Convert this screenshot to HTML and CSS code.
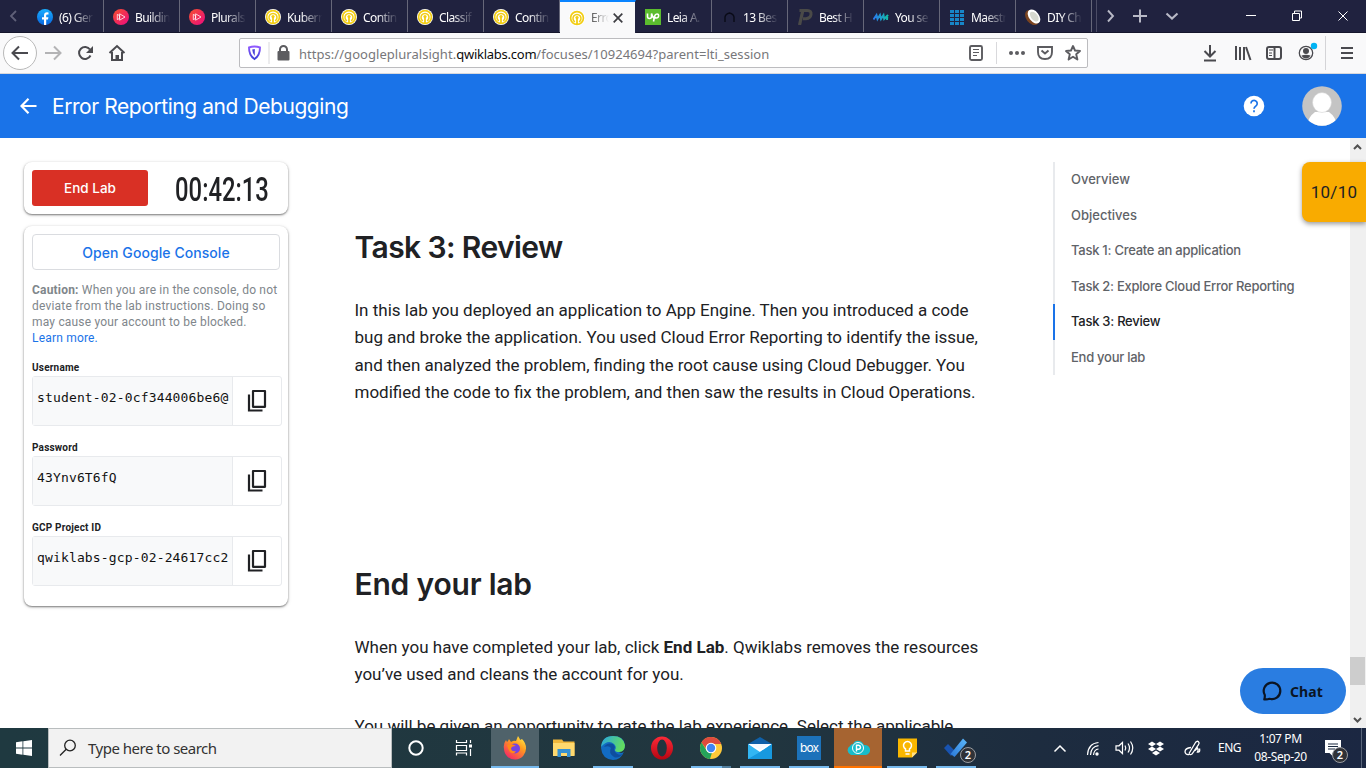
FILE: index.html
```html
<!DOCTYPE html>
<html lang="en">
<head>
<meta charset="utf-8">
<title>Error Reporting and Debugging</title>
<link rel="stylesheet" href="styles.css">
</head>
<body>
<svg class="defs" width="0" height="0">
  <defs>
    <linearGradient id="fb" x1="0" y1="0" x2="0" y2="1"><stop offset="0" stop-color="#19afff"/><stop offset="1" stop-color="#0866e0"/></linearGradient>
    <linearGradient id="ps" x1="0" y1="0" x2="1" y2="1"><stop offset="0" stop-color="#f6512d"/><stop offset="1" stop-color="#ec0a80"/></linearGradient>
    <linearGradient id="shield" x1="0" y1="0" x2="0" y2="1"><stop offset="0" stop-color="#9059ff"/><stop offset="1" stop-color="#3a3fd6"/></linearGradient>
    <linearGradient id="wave" x1="0" y1="0" x2="1" y2="0"><stop offset="0" stop-color="#2a78f0"/><stop offset="1" stop-color="#12bfa8"/></linearGradient>
    <linearGradient id="ff" x1=".9" y1="0" x2=".2" y2="1"><stop offset="0" stop-color="#fff04a"/><stop offset=".4" stop-color="#ff9a1f"/><stop offset="1" stop-color="#f5206a"/></linearGradient>
    <linearGradient id="edge" x1="0" y1="0" x2="1" y2=".3"><stop offset="0" stop-color="#27a5e4"/><stop offset="1" stop-color="#62dc60"/></linearGradient>
    <linearGradient id="opera" x1="0" y1="0" x2="0" y2="1"><stop offset="0" stop-color="#ff2a38"/><stop offset="1" stop-color="#b40612"/></linearGradient>
    <linearGradient id="check" x1="0" y1="1" x2="1" y2="0"><stop offset="0" stop-color="#2a78d8"/><stop offset="1" stop-color="#5cb8fa"/></linearGradient>
  </defs>
  <symbol id="qwik" viewBox="0 0 16 16"><circle cx="8" cy="8" r="8" fill="#fff"/><circle cx="8" cy="8" r="6.4" fill="none" stroke="#f2cd13" stroke-width="1.7"/><path d="M5.9 11.8A4 4 0 1 1 10.1 11.8" fill="none" stroke="#f2cd13" stroke-width="1.5"/><circle cx="8" cy="7.6" r="1.6" fill="#f2cd13"/><path d="M8 8v7" stroke="#f2cd13" stroke-width="1.8"/></symbol>
  <symbol id="plural" viewBox="0 0 16 16"><circle cx="8" cy="8" r="8" fill="url(#ps)"/><path d="M4.3 5.4v5.2l2.3-1.2V6.600zM6.600 4.800v6.4L12 8z" fill="none" stroke="#fff" stroke-width=".9" opacity=".85"/></symbol>
  <symbol id="copy" viewBox="0 0 24 24"><path d="M8 2h12v15.800H8z" fill="none" stroke="#202124" stroke-width="2.200" stroke-linejoin="round"/><path d="M4 5.500v16H17.500" fill="none" stroke="#202124" stroke-width="2.200"/></symbol>
</svg>

<div class="tabs">
  <svg class="scroll-left" viewBox="0 0 28 32"><path d="M16 11l-5 5 5 5" fill="none" stroke="#5f6078" stroke-width="1.800"/></svg>
  <div class="tab"><svg viewBox="0 0 16 16"><circle cx="8" cy="8" r="8" fill="url(#fb)"/><path d="M7 16v-5.400H5V8.300h2V6.500C7 4.400 8.200 3.300 10 3.300l1.500.1v2h-1c-1 0-1.300.5-1.300 1.200v1.700h2.200l-.4 2.300H9.200V16z" fill="#fff"/></svg><span>(6) Ger</span></div>
  <div class="tab"><svg><use href="#plural"/></svg><span>Buildin</span></div>
  <div class="tab"><svg><use href="#plural"/></svg><span>Plurals</span></div>
  <div class="tab"><svg><use href="#qwik"/></svg><span>Kubern</span></div>
  <div class="tab"><svg><use href="#qwik"/></svg><span>Contin</span></div>
  <div class="tab"><svg><use href="#qwik"/></svg><span>Classif</span></div>
  <div class="tab"><svg><use href="#qwik"/></svg><span>Contin</span></div>
  <div class="tab active"><svg><use href="#qwik"/></svg><span>Erro</span><svg class="close" viewBox="0 0 10 10"><path d="M.7.7l8.600 8.600M9.300.7L.7 9.300" stroke="#3d3d42" stroke-width="1.700"/></svg></div>
  <div class="tab"><svg viewBox="0 0 16 16"><path d="M0 0h16v16H0z" fill="#5bbc2e"/><path d="M2.500 4.500v3q0 2 2 2t2-2v-3q1 4 3 5M8.500 12.500L9.700 7q.5-2 2.300-2t1.600 2q-.3 2-2.200 2Q10 9 9 7.500" fill="none" stroke="#fff" stroke-width="1.600"/></svg><span>Leia A.</span></div>
  <div class="tab"><svg viewBox="0 0 16 16"><path d="M4 13V8Q4.500 5 8.500 4 12.500 5 13 8v5" fill="none" stroke="#090a17" stroke-width="1.400"/></svg><span>13 Bes</span></div>
  <div class="tab"><svg viewBox="0 0 16 16"><path d="M2.500 1.500h8q4 .2 3.500 4T9 9.700H6" fill="none" stroke="#4a4a48" stroke-width="3"/><path d="M6 1L2.500 16" stroke="#4a4a48" stroke-width="3.200"/></svg><span>Best H</span></div>
  <div class="tab"><svg viewBox="0 0 16 16"><path d="M.5 10.500L3.500 6l1 4L7 6l1 4 2.500-4 .7 4L15 6M14.500 6l-.5 5" fill="none" stroke="url(#wave)" stroke-width="1.900"/></svg><span>You se</span></div>
  <div class="tab"><svg viewBox="0 0 16 16"><path d="M1 2.500h14M1 6.500h14M1 10.500h14M1 14.500h14" stroke="#1786c8" stroke-width="3" stroke-dasharray="4 1"/></svg><span>Maestr</span></div>
  <div class="tab last"><svg viewBox="0 0 16 16"><ellipse cx="7" cy="8.500" rx="5.800" ry="8.500" transform="rotate(-38 7 8.500)" fill="#7a4320"/><ellipse cx="9" cy="7.500" rx="5" ry="8" transform="rotate(-38 9 7.500)" fill="#fff"/><ellipse cx="9.300" cy="7.600" rx="3.300" ry="5.700" transform="rotate(-38 9.300 7.600)" fill="#d6d8cf"/></svg><span>DIY Ch</span></div>
  <svg class="tab-tools" viewBox="0 0 274 32"><path d="M4.500 0v33" stroke="#4c4d66"/><path d="M16 10.500l5 5.500-5 5.500" fill="none" stroke="#b8b9c6" stroke-width="1.900"/><path d="M41 16h14M48 9.500v13" stroke="#b8b9c6" stroke-width="2"/><path d="M74.500 13.500l5.500 5 5.500-5" fill="none" stroke="#b8b9c6" stroke-width="2.100"/><path d="M154 15.500h10M200.500 13.500h7v7h-7zM202.500 13v-2h7v7h-2M246.500 11.500l9 9M255.500 11.500l-9 9" fill="none" stroke="#fff" stroke-width="1"/></svg>
</div>

<div class="toolbar">
  <svg class="nav" viewBox="0 0 239 40"><circle cx="20" cy="20" r="16.500" fill="#fff" stroke="#b9b9b9"/><g fill="none" stroke="#4a4a4f" stroke-width="2"><path d="M28 20H13M19 13.500L12.500 20l6.500 6.500"/><path d="M45 20h15M54 13.500l6.500 6.500-6.500 6.500" stroke="#b3b3b5"/><path d="M90 16.500A6 6 0 1 0 90.500 22.500"/><path d="M109.500 20l7.500-7 7.500 7M112 19v8h10v-8"/></g><path d="M93 13v7h-7z" fill="#4a4a4f"/><path d="M115.500 22h3.500v6h-3.500z" fill="#4a4a4f"/></svg>
  <div class="url">
    <svg class="lock" viewBox="0 0 58 28"><path d="M14 7.500q-3 0-5.500 1 0 8 5.500 11.500 5.500-3.500 5.500-11.500-2.500-1-5.500-1z" fill="none" stroke="url(#shield)" stroke-width="1.900"/><path d="M14.300 10q-2 0-2.600.4.400 4.500 2.600 6.600z" fill="#4b45d8"/><path d="M28.500 3v22" stroke="#d9d9dc"/><rect x="37" y="12" width="12" height="9.500" rx="1" fill="#5c5c60"/><path d="M39.500 13v-2.500a3.500 3.500 0 0 1 7 0V13" fill="none" stroke="#5c5c60" stroke-width="2"/></svg>
    <div class="address">https://googlepluralsight.<b>qwiklabs.com</b>/focuses/10924694?parent=lti_session</div>
    <svg class="url-tools" viewBox="0 0 127 28"><g fill="none" stroke="#5c5c60" stroke-width="1.900"><rect x="10" y="7" width="12" height="14" rx="1.500"/><path d="M13 10.500h6M13 13.500h6M13 16.500h4" stroke-width="1.200"/><path d="M78 8h14v5q0 7-7 7t-7-7zM81.500 11.500l3.500 3 3.500-3"/><path d="M113 7l2 4.500 5 .5-3.800 3.300 1.200 5.200L113 17.800l-4.400 2.700 1.200-5.200L106 12l5-.5z" stroke-linejoin="round"/></g><path d="M36.500 3v22" stroke="#d9d9dc"/><g fill="#5c5c60"><circle cx="51" cy="14" r="2"/><circle cx="57" cy="14" r="2"/><circle cx="63" cy="14" r="2"/></g></svg>
  </div>
  <svg class="actions" viewBox="0 0 178 40"><g fill="none" stroke="#4a4a4f" stroke-width="2"><path d="M22 12v11M16.500 18l5.500 5.500 5.500-5.500M16 27.500h12M48 13v14M52 14v13M56 14v13" /><path d="M58 14l4.500 13"/><rect x="79" y="14" width="14" height="12" rx="2"/><path d="M86.500 14v12"/><path d="M81 17h4M81 20h3M81 22.500h3" stroke-width="1"/><circle cx="118" cy="20" r="6.700" stroke-width="1.300"/><path d="M153 15h12M153 20h12M153 25h12" stroke-width="2"/></g><circle cx="118" cy="18" r="3" fill="#4a4a4f"/><path d="M113.500 22.500q4.500-1.500 9 0-1.500 3-4.500 3t-4.500-3z" fill="#4a4a4f"/><circle cx="126" cy="13" r="3.200" fill="#00b3f4"/><path d="M137.500 3v34" stroke="#d4d4d7"/></svg>
</div>

<header class="header">
  <svg class="back" viewBox="0 0 18 18"><path d="M16.500 9H2M8.500 1.800L1.500 9l7 7.200" fill="none" stroke="#fff" stroke-width="2.200"/></svg>
  <h1>Error Reporting and Debugging</h1>
  <svg class="help" viewBox="0 0 22 22"><circle cx="11" cy="11" r="10.300" fill="#fff"/><path d="M8 8.500a3.100 3.100 0 1 1 5 2.400q-2 1.500-2 2.900M11 15.300v2" fill="none" stroke="#1a73e8" stroke-width="1.700"/></svg>
  <svg class="avatar" viewBox="0 0 40 40"><clipPath id="face"><circle cx="20" cy="20" r="19.800"/></clipPath><g clip-path="url(#face)"><path d="M0 0h40v40H0z" fill="#c4c4c4"/><path d="M5 40q1-9 8-14h14q7 5 8 14z" fill="#fff"/><ellipse cx="20" cy="16.500" rx="9.500" ry="10" fill="#fff" stroke="#d4d4d4" stroke-width=".6"/></g></svg>
</header>

<main class="page">
  <aside class="side">
    <section class="card timer-card"><button class="end">End Lab</button><div class="timer"><span>00:42:13</span></div></section>
    <section class="card details">
      <button class="open">Open Google Console</button>
      <p class="caution"><b>Caution:</b> When you are in the console, do not<br>deviate from the lab instructions. Doing so<br>may cause your account to be blocked.<br><a>Learn more.</a></p>
      <label>Username</label>
      <div class="field"><code>student-02-0cf344006be6@</code><div class="copy"><svg><use href="#copy"/></svg></div></div>
      <label>Password</label>
      <div class="field"><code>43Ynv6T6fQ</code><div class="copy"><svg><use href="#copy"/></svg></div></div>
      <label>GCP Project ID</label>
      <div class="field"><code>qwiklabs-gcp-02-24617cc2</code><div class="copy"><svg><use href="#copy"/></svg></div></div>
    </section>
  </aside>
  <article class="lab">
    <h2 class="review">Task 3: Review</h2>
    <p>In this lab you deployed an application to App Engine. Then you introduced a code<br>bug and broke the application. You used Cloud Error Reporting to identify the issue,<br>and then analyzed the problem, finding the root cause using Cloud Debugger. You<br>modified the code to fix the problem, and then saw the results in Cloud Operations.</p>
    <h2 class="ending">End your lab</h2>
    <p>When you have completed your lab, click <b>End Lab</b>. Qwiklabs removes the resources<br>you’ve used and cleans the account for you.</p>
    <p>You will be given an opportunity to rate the lab experience. Select the applicable</p>
  </article>
  <nav class="outline">
    <a>Overview</a><a>Objectives</a><a>Task 1: Create an application</a><a>Task 2: Explore Cloud Error Reporting</a><a class="current">Task 3: Review</a><a>End your lab</a>
  </nav>
  <div class="scrollbar"><svg viewBox="0 0 16 16"><path d="M4 11l3.500-3.500L11 11" fill="none" stroke="#505050" stroke-width="2"/></svg><i></i><svg viewBox="0 0 16 16"><path d="M4 6l3.500 3.500L11 6" fill="none" stroke="#505050" stroke-width="2"/></svg></div>
  <div class="score">10/10</div>
  <div class="chat"><svg viewBox="0 0 20 20"><path d="M2.300 18.300Q3 16 2.800 14A8.300 8.300 0 1 1 7.500 17.800Q5 18.800 2.300 18.300z" fill="none" stroke="#0b1524" stroke-width="2.200" stroke-linejoin="round"/></svg><span>Chat</span></div>
</main>

<footer class="taskbar">
  <svg class="start" viewBox="0 0 48 40"><path d="M16 14.300l6.500-1v6.200H16zM23.300 13.200L32 12v7.500h-8.700zM16 20.400h6.500v6.300l-6.500-1zM23.300 20.400H32V28l-8.700-1.200z" fill="#fff"/></svg>
  <div class="search"><svg viewBox="0 0 18 18"><circle cx="11" cy="6.500" r="5.300" fill="none" stroke="#222" stroke-width="1.300"/><path d="M7.200 10.300L1 16.500" stroke="#222" stroke-width="1.300"/></svg><span>Type here to search</span></div>
  <svg class="cell" viewBox="0 0 48 40"><circle cx="24" cy="20" r="6.700" fill="none" stroke="#fff" stroke-width="2"/></svg>
  <svg class="view" viewBox="0 0 51 40"><path d="M16.500 12v2.500h10V12M16.500 27.500V25h10v2.500M16.500 17.500h10v5h-10zM30.500 12v3M30.500 21v7" fill="none" stroke="#fff" stroke-width="1.200"/><path d="M29 16.500h3v3h-3z" fill="#fff"/></svg>
  <div class="apps">
    <div class="app selected"><svg viewBox="0 0 24 24"><path d="M5 5l1-2 2 3q3-2 5-1l2-5q2 3 2 4l2-1q4 4 4 9a11 11 0 0 1-22 1Q0 8 3 4l1 2z" fill="url(#ff)"/><circle cx="12" cy="12.500" r="5" fill="#7543e2"/><path d="M4 9q5-2 9 1-5 0-5 3 1 3 5 2-2 4-6 1-2-3-3-7z" fill="#ff8a16"/></svg></div>
    <div class="app"><svg viewBox="0 0 24 24"><path d="M1 3.500h9l1.500 2H22.500v14H1z" fill="#f0b73c"/><path d="M1 7h21.500v13H1z" fill="#ffd96e"/><path d="M5.500 13h13v8h-3.500v-4H9v4H5.500z" fill="#3691d2"/></svg></div>
    <div class="app run"><svg viewBox="0 0 24 24"><path d="M0 12Q1 0 12 0q11 0 12 9 0 6-6 7 3 2 5-.5Q20 24 12 24 1 23 0 12z" fill="#126bc2"/><path d="M0 11Q1 0 12 0q10 0 12 9 0 7-6 7-4 0-4-2 2-3-1-6-6-5-13 3z" fill="url(#edge)"/><path d="M12 8q-6-2-9 3 5-2 7 1-3 5 3 9 4 2 9-3-4 2-7-1-3-3-1-6z" fill="#0e4e9e"/></svg></div>
    <div class="app"><svg viewBox="0 0 24 24"><ellipse cx="12" cy="12" rx="11" ry="11.500" fill="url(#opera)"/><ellipse cx="12" cy="12" rx="4.800" ry="8.500" fill="#21353f"/></svg></div>
    <div class="app run chrome"><svg viewBox="0 0 24 24"><circle cx="12" cy="12" r="11" fill="#ffca3a"/><path d="M2.500 6.500A11 11 0 0 1 22.200 8H12L8 14z" fill="#df4b3e"/><path d="M2.500 6.500L8 15q2 2 5 1.500L11 23A11 11 0 0 1 2.500 6.500z" fill="#25a35a"/><circle cx="12" cy="12" r="5.300" fill="#fff"/><circle cx="12" cy="12" r="4.200" fill="#4285f4"/></svg></div>
    <div class="app run"><svg viewBox="0 0 24 24"><path d="M0 8l12-7 12 7v15H0z" fill="#0f60a8"/><path d="M0 8h24L12 18z" fill="#fff"/><path d="M0 8l12 8 12-8v15H0z" fill="#32b6f3"/><path d="M0 23l12-7 12-8v15z" fill="#1799df"/><path d="M3 8h18l-9 6z" fill="#f5faff"/></svg></div>
    <div class="app run"><div class="box">box</div></div>
    <div class="app cloud"><svg viewBox="0 0 24 24"><path d="M5 19a5 5 0 0 1-1-9q1-2 3-2 2-4 6-3 3 0 5 4a5 5 0 0 1 2 10z" fill="#18bdca"/><circle cx="12" cy="12" r="5.500" fill="none" stroke="#fff"/><path d="M10.500 15.500V9.300h2q2 .2 2 2t-2 1.900h-2" fill="none" stroke="#fff" stroke-width="1.400"/></svg></div>
    <div class="app run"><svg viewBox="0 0 24 24"><path d="M3 2.500h19v14l-5 5H3z" fill="#fab700"/><path d="M17 21.500v-5h5z" fill="#ffe08a"/><path d="M10.500 15v-2a4 4 0 1 1 4 0v2zM10.500 18h4" fill="none" stroke="#fff" stroke-width="1.500"/></svg></div>
    <div class="app run todo"><svg viewBox="0 0 24 24"><path d="M0 12l4-4 7 7-4 5z" fill="#1853b0"/><path d="M6.500 18L19 2.500l4 4L10.500 21z" fill="url(#check)"/></svg><em>2</em></div>
  </div>
  <svg class="tray" viewBox="0 0 170 40"><g fill="none" stroke="#fff" stroke-width="1.500"><path d="M14.500 23.500L20 18l5.500 5.500"/><path d="M47.500 27Q48 15.500 58.500 14.500M50.500 27Q51 18.500 58.500 17.700M53.500 27Q54 21.500 58.500 21" stroke-width="1.200"/><path d="M76 17.800h3l3.500-3.300v11L79 22.200h-3zM85 17.500q1.500 2.500 0 5M88 15.500q3 4.500 0 9M90.500 13.500q4.500 6.500 0 13" stroke-width="1.200"/><path d="M149 25.500L155.500 14.500q1.500-2 3-.8 1.300 1.200 0 3L152 26q-2 1.500-3-.5M151 19.500q-6 .5-6 4.500.5 3 4 2.500M155 22.500l2.500-2.500q1.500 2 0 4 3 .5 2-3.500" stroke-width="1.300"/></g><circle cx="57" cy="26" r="1.700" fill="#fff"/><path d="M108 16l4-2.500 4 2.500-4 2.500zM116 16l4-2.500 4 2.500-4 2.500zM108 21l4-2.500 4 2.500-4 2.500zM116 21l4-2.500 4 2.500-4 2.500zM112 25l4-2.500 4 2.500-4 2.500z" fill="#fff"/></svg>
  <span class="lang">ENG</span>
  <div class="clock"><span>1:07 PM</span><span>08-Sep-20</span></div>
  <div class="notice"><svg viewBox="0 0 16 16"><path d="M0 0h16v13H7.500v3L4.500 13H0z" fill="#fff"/><path d="M3 4h10M3 6.500h10M3 9h7" stroke="#1c2b40" stroke-width="1.100"/></svg><em>2</em></div>
</footer>
</body>
</html>
```
FILE: styles.css
```css
* { box-sizing: border-box; }
body { margin: 0; width: 1366px; height: 768px; overflow: hidden; background: #fff; color: #202124; font-family: Roboto, sans-serif; display: flex; flex-direction: column; }
svg { display: block; flex: none; }
.defs { position: absolute; }
button { margin: 0; padding: 0; font-family: Inter, sans-serif; }

.tabs { height: 33px; flex: none; display: flex; background: #20223f; border-bottom: 1px solid #15162c; }
.scroll-left { width: 28px; height: 32px; }
.tab { width: 76px; height: 32px; flex: none; padding: 2px 5px 0 9px; display: flex; align-items: center; border-right: 1px solid #666779; color: #fff; font: 12px "Noto Sans", sans-serif; }
.tab svg { width: 16px; height: 16px; margin-right: 6px; }
.tab span { flex: 1; white-space: nowrap; letter-spacing: -.6px; -webkit-mask-image: linear-gradient(90deg, #000 35%, transparent 90%); mask-image: linear-gradient(90deg, #000 35%, transparent 90%); }
.tab.active { height: 33px; background: #f9f9fa; border-top: 2px solid #0a84ff; border-right: 1px solid #20223f; color: #222; padding-top: 0; padding-right: 12px; }
.tab.active span { width: 18px; flex: none; -webkit-mask-image: linear-gradient(90deg, #000c, transparent); mask-image: linear-gradient(90deg, #000c, transparent); }
.tab.active .close { width: 10px; height: 10px; margin: 0 0 0 4px; }
.tab-tools { width: 274px; height: 32px; }

.toolbar { height: 41px; flex: none; display: flex; align-items: flex-start; background: #f9f9fa; border-bottom: 1px solid #d8d8dc; }
.nav { width: 239px; height: 40px; }
.url { width: 849px; height: 30px; margin-top: 5px; display: flex; align-items: center; background: #fff; border: 1px solid #bcbcbf; border-radius: 2px; }
.lock { width: 59px; height: 28px; }
.address { width: 661px; padding-top: 1px; white-space: nowrap; color: #77777a; font: 13px "Noto Sans", sans-serif; letter-spacing: .04px; }
.address b { color: #0c0c0d; font-weight: 400; letter-spacing: -.25px; }
.url-tools { width: 127px; height: 28px; }
.actions { width: 178px; height: 40px; margin-left: 100px; }

.header { height: 64px; flex: none; display: flex; align-items: center; padding: 0 24px 0 20px; background: #1a73e8; color: #fff; }
.back { width: 18px; height: 18px; }
.header h1 { margin: 0 auto 0 14px; font: 400 21px Inter, sans-serif; letter-spacing: -.43px; }
.help { width: 22px; height: 22px; margin-right: 37px; }
.avatar { width: 40px; height: 40px; }

.page { position: relative; height: 590px; flex: none; display: flex; overflow: hidden; padding-left: 24px; }
.side { width: 264px; flex: none; padding-top: 24px; display: flex; flex-direction: column; gap: 12px; }
.card { background: #fff; border-radius: 8px; box-shadow: 0 1px 2px #0007, 0 1px 4px #0002; }
.timer-card { height: 52px; padding: 8px; display: flex; }
.end { width: 116px; height: 36px; flex: none; background: #d93025; color: #fff; border: 0; border-radius: 3px; font-size: 13.5px; font-weight: 500; }
.timer { flex: 1; min-width: 0; display: flex; justify-content: center; align-items: center; padding: 2px 0 0 15px; font-size: 34px; font-weight: 500; }
.timer span { transform: scaleX(.7); }
.details { height: 380px; padding: 8px; }
.open { width: 248px; height: 36px; display: block; background: #fff; border: 1px solid #dadce0; border-radius: 4px; color: #1a73e8; font-size: 14px; font-weight: 500; letter-spacing: .07px; }
.caution { margin: 12px 0 15px; color: #80868b; font-size: 12px; line-height: 16px; white-space: nowrap; letter-spacing: .19px; }
.caution a { color: #1a73e8; }
.details label { display: block; height: 14px; padding-top: 1px; font-size: 10px; font-weight: 700; line-height: 12px; letter-spacing: .2px; }
.field { width: 250px; height: 50px; display: flex; margin: 1px 0 15px; border: 1px solid #e8eaed; border-radius: 3px; }
.field code { width: 200px; padding: 12px 0 0 4px; background: #f8f9fa; border-right: 1px solid #e8eaed; color: #111; font: 13px/17px "DejaVu Sans Mono", monospace; letter-spacing: .15px; }
.copy { flex: 1; display: flex; align-items: center; justify-content: center; }
.copy svg { width: 24px; height: 24px; }

.lab { width: 698px; flex: none; padding-left: 66.5px; white-space: nowrap; }
.lab h2 { margin: 0; height: 36px; font: 600 30px/37px Inter, sans-serif; letter-spacing: -.6px; }
.lab .review { margin-top: 91px; }
.lab .ending { margin-top: 160px; letter-spacing: -.2px; }
.lab p { margin: 32px 0 0; font-size: 17px; line-height: 27.3px; }
.lab p + p { margin-top: 24px; }

.outline { width: 297px; height: 213px; margin-top: 24px; margin-left: 67px; flex: none; display: flex; flex-direction: column; }
.outline a { height: 35.500px; border-left: 2px solid #e8eaed; padding-left: 16px; color: #5f6368; font: 500 13px/35px Inter, sans-serif; letter-spacing: -.26px; white-space: nowrap; }
.outline a:nth-child(-n+2) { letter-spacing: 0; }
.outline .current { border-color: #1a73e8; color: #202124; }
.scrollbar { width: 16px; flex: none; display: flex; flex-direction: column; background: #f0f0f0; }
.scrollbar svg { width: 16px; height: 16px; }
.scrollbar i { width: 15px; height: 28px; margin: 503px 0 auto; background: #cdcdcd; }
.score { position: absolute; right: 0; top: 24px; width: 64px; height: 60px; border-radius: 8px 0 0 8px; background: #f9ab00; box-shadow: 0 2px 5px #0006; color: #202124; font-size: 17px; line-height: 60px; text-align: center; letter-spacing: .3px; }
.chat { position: absolute; left: 1240px; top: 530px; width: 106px; height: 46px; display: flex; align-items: center; gap: 8px; padding-left: 22px; border-radius: 23px; background: #2a7de1; color: #0b1524; font: 700 14px "Noto Sans", sans-serif; letter-spacing: .1px; }
.chat svg { width: 20px; height: 20px; }

.taskbar { height: 40px; flex: none; display: flex; background: linear-gradient(90deg, #1f3940, #21363f 55%, #1d2c3f 76%, #1b2742); color: #fff; font-family: "Noto Sans", sans-serif; }
.start { width: 48px; height: 40px; }
.search { width: 344px; display: flex; align-items: center; padding-left: 10px; gap: 11px; border: 1px solid #b9bdbe; background: #f2f2f2; color: #333; font-size: 15px; letter-spacing: -.5px; }
.search svg { width: 18px; height: 18px; }
.cell { width: 48px; height: 40px; }
.view { width: 51px; height: 40px; }
.apps { display: flex; gap: 1px; width: 549px; }
.app { position: relative; width: 48px; display: flex; align-items: center; justify-content: center; flex: none; }
.app > svg { width: 24px; height: 24px; }
.run::after, .selected::after, .cloud::after { content: ""; position: absolute; left: 4px; right: 4px; bottom: 0; height: 2px; background: #76b9ed; }
.chrome::after { background: linear-gradient(90deg, #76b9ed 31px, #527f9e 31px); }
.selected { background: #4f626a; }
.selected::after { left: 0; right: 0; }
.cloud { background: #a66431; }
.cloud::after { left: 0; right: 0; background: #ff7300; }
.box { width: 24px; height: 24px; background: #1c72ba; font: 12px/23px Inter, sans-serif; letter-spacing: -.9px; text-align: center; }
em { position: absolute; width: 16px; height: 16px; border: 1px solid #9b9da2; border-radius: 50%; background: #303237; color: #fff; font: 600 11px/14px "Noto Sans", sans-serif; text-align: center; }
.todo em { left: 28px; top: 19px; }
.tray { width: 170px; height: 40px; }
.lang { width: 32px; padding-left: 8px; font-size: 12px; line-height: 40px; letter-spacing: -.5px; }
.clock { width: 77px; display: flex; flex-direction: column; align-items: center; font-size: 12px; line-height: 18px; padding: 2px 0 0; letter-spacing: -.4px; white-space: nowrap; }
.notice { position: relative; width: 43px; padding: 12px 0 0 6px; border-right: 1px solid #59657a; }
.notice svg { width: 16px; height: 16px; }
.notice em { left: 13px; top: 19px; }
```
